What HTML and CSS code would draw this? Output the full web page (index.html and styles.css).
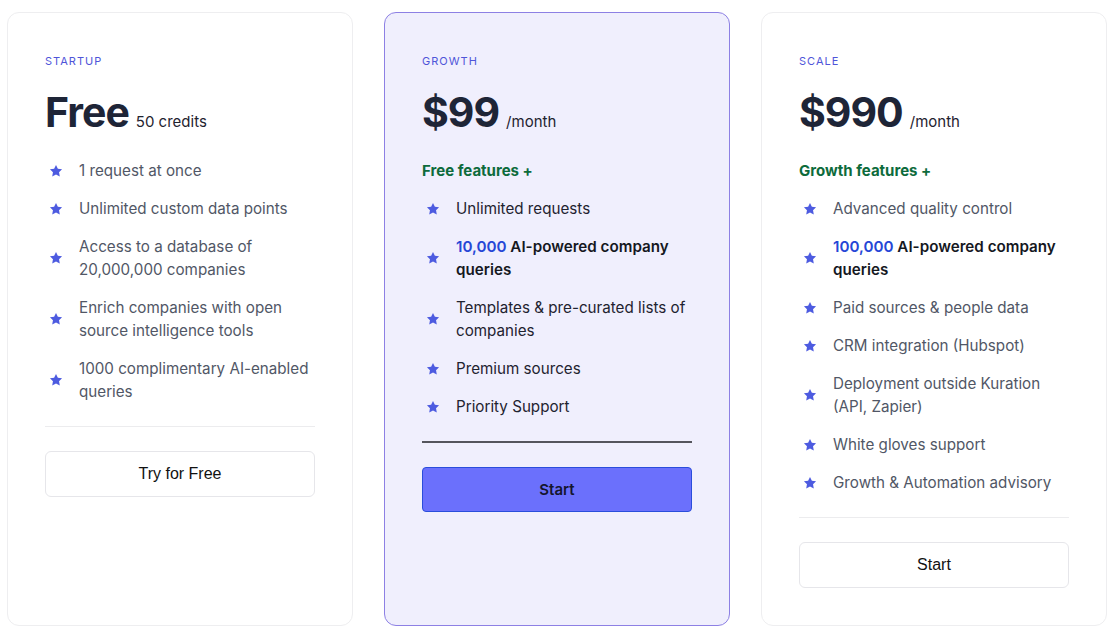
FILE: index.html
```html
<!DOCTYPE html>
<html lang="en">

<head>
    <meta charset="UTF-8">
    <meta name="viewport" content="width=device-width, initial-scale=1.0">
    <title>Pricing</title>
    <link rel="stylesheet" href="styles.css">
</head>

<body>
    <svg width="0" height="0" class="defs">
        <symbol id="star" viewBox="0 0 24 24">
            <path d="M12 1.5l3.2 6.6 7.2 1-5.2 5.1 1.3 7.2L12 18l-6.5 3.4 1.3-7.2L1.6 9.1l7.2-1z" />
        </symbol>
    </svg>

    <div class="plans">
        <div class="plan">
            <div class="tier">STARTUP</div>
            <div class="price"><span class="amount">Free</span><span class="unit">50 credits</span></div>
            <ul class="features">
                <li><svg class="star"><use href="#star" /></svg><span>1 request at once</span></li>
                <li><svg class="star"><use href="#star" /></svg><span>Unlimited custom data points</span></li>
                <li><svg class="star"><use href="#star" /></svg><span>Access to a database of 20,000,000 companies</span></li>
                <li><svg class="star"><use href="#star" /></svg><span>Enrich companies with open source intelligence tools</span></li>
                <li><svg class="star"><use href="#star" /></svg><span>1000 complimentary AI-enabled queries</span></li>
            </ul>
            <hr>
            <button class="btn">Try for Free</button>
        </div>

        <div class="plan featured">
            <div class="tier">GROWTH</div>
            <div class="price"><span class="amount">$99</span><span class="unit">/month</span></div>
            <div class="includes">Free features +</div>
            <ul class="features">
                <li><svg class="star"><use href="#star" /></svg><span>Unlimited requests</span></li>
                <li><svg class="star"><use href="#star" /></svg><span class="strong"><em>10,000</em> AI-powered company queries</span></li>
                <li><svg class="star"><use href="#star" /></svg><span>Templates &amp; pre-curated lists of companies</span></li>
                <li><svg class="star"><use href="#star" /></svg><span>Premium sources</span></li>
                <li><svg class="star"><use href="#star" /></svg><span>Priority Support</span></li>
            </ul>
            <hr>
            <button class="btn primary">Start</button>
        </div>

        <div class="plan">
            <div class="tier">SCALE</div>
            <div class="price"><span class="amount">$990</span><span class="unit">/month</span></div>
            <div class="includes">Growth features +</div>
            <ul class="features">
                <li><svg class="star"><use href="#star" /></svg><span>Advanced quality control</span></li>
                <li><svg class="star"><use href="#star" /></svg><span class="strong"><em>100,000</em> AI-powered company queries</span></li>
                <li><svg class="star"><use href="#star" /></svg><span>Paid sources &amp; people data</span></li>
                <li><svg class="star"><use href="#star" /></svg><span>CRM integration (Hubspot)</span></li>
                <li><svg class="star"><use href="#star" /></svg><span>Deployment outside Kuration (API, Zapier)</span></li>
                <li><svg class="star"><use href="#star" /></svg><span>White gloves support</span></li>
                <li><svg class="star"><use href="#star" /></svg><span>Growth &amp; Automation advisory</span></li>
            </ul>
            <hr>
            <button class="btn">Start</button>
        </div>
    </div>
</body>

</html>
```

FILE: styles.css
```css
body {
    margin: 0;
    background-color: #ffffff;
    font-family: 'Inter', 'Noto Sans', sans-serif;
    color: #1f2937;
}

.defs {
    position: absolute;
}

.plans {
    display: grid;
    grid-template-columns: repeat(3, 346px);
    gap: 31px;
    padding: 12px 0 12px 7px;
}

.plan {
    display: flex;
    flex-direction: column;
    height: 614px;
    box-sizing: border-box;
    padding: 41px 37px 0 37px;
    border: 1px solid #eeeef0;
    border-radius: 12px;
    background-color: #ffffff;
}

.plan.featured {
    background-color: #f0effd;
    border-color: #8d80e4;
}

.tier {
    font-size: 11px;
    letter-spacing: 1px;
    line-height: 14px;
    color: #4f55d9;
}

.price {
    display: flex;
    align-items: baseline;
    margin-top: 19px;
    height: 48px;
}

.amount {
    font-size: 41px;
    font-weight: 700;
    letter-spacing: -1px;
    color: #1e2537;
}

.unit {
    font-size: 15px;
    margin-left: 7px;
    color: #1f2330;
}

.includes {
    margin-top: 26px;
    font-size: 15px;
    font-weight: 700;
    color: #0d6b3c;
    line-height: 20px;
}

.features {
    list-style: none;
    margin: 24px 0 0 0;
    padding: 0;
    display: flex;
    flex-direction: column;
    gap: 15px;
}

.includes + .features {
    margin-top: 16px;
}

.features li {
    display: flex;
    align-items: center;
    font-size: 15.2px;
    line-height: 23px;
    color: #515766;
}

.featured .features li {
    color: #1f2330;
}

.star {
    flex: none;
    width: 14px;
    height: 14px;
    margin: 0 16px 0 4px;
    fill: #4d5be0;
}

.strong {
    font-weight: 600;
    color: #15181f;
}

.strong em {
    font-style: normal;
    color: #2547d6;
}

hr {
    width: 100%;
    margin: 23px 0 0 0;
    border: none;
    border-top: 1px solid #ececee;
}

.featured hr {
    border-top: 2px solid #55555d;
}

.btn {
    margin-top: 24px;
    height: 46px;
    border: 1px solid #e6e6ea;
    border-radius: 6px;
    background-color: #ffffff;
    font-family: 'Liberation Sans', Arial, sans-serif;
    font-size: 16px;
    color: #111111;
}

.btn.primary {
    height: 45px;
    background-color: #6b70fc;
    border-color: #2a4ddb;
    border-radius: 4px;
    font-family: 'Inter', sans-serif;
    font-weight: 600;
    font-size: 15px;
    color: #15162e;
}
```
